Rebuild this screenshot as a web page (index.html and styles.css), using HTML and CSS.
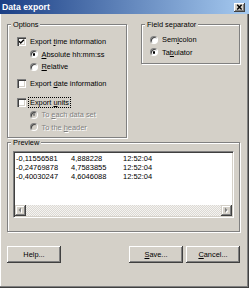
FILE: index.html
```html
<!DOCTYPE html>
<html>
<head>
<meta charset="utf-8">
<title>Data export</title>
<link rel="stylesheet" href="styles.css">
</head>
<body>
<div class="window">
  <div class="titlebar">
    <span class="title">Data export</span>
    <span class="close"><svg width="11" height="9" viewBox="0 0 11 9"><path d="M3.2 1.8 L7.6 6.4 M7.6 1.8 L3.2 6.4" stroke="#000" stroke-width="1.4" fill="none"/></svg></span>
  </div>
  <div class="body">
    <div class="top">
      <fieldset class="group options">
        <legend>Options</legend>
        <div class="gbody opt">
          <div class="row"><span class="box"><svg width="9" height="9" viewBox="0 0 9 9"><path d="M2.1 4.3 L3.7 5.9 L6.9 2.7" fill="none" stroke="#000" stroke-width="1.4"/></svg></span><span class="lbl">Export <u>t</u>ime information</span></div>
          <div class="row sub checked"><span class="radio"></span><span class="lbl"><u>A</u>bsolute hh:mm:ss</span></div>
          <div class="row sub"><span class="radio"></span><span class="lbl"><u>R</u>elative</span></div>
          <div class="row m1"><span class="box"></span><span class="lbl">Export <u>d</u>ate information</span></div>
          <div class="row m2"><span class="box"></span><span class="lbl focus">Export <u>u</u>nits</span></div>
          <div class="row sub disabled checked"><span class="radio"></span><span class="lbl">To <u>e</u>ach data set</span></div>
          <div class="row sub disabled"><span class="radio"></span><span class="lbl">To the <u>h</u>eader</span></div>
        </div>
      </fieldset>
      <fieldset class="group sep">
        <legend>Field separator</legend>
        <div class="gbody sepb">
          <div class="row"><span class="radio"></span><span class="lbl">Sem<u>i</u>colon</span></div>
          <div class="row checked"><span class="radio"></span><span class="lbl">Ta<u>b</u>ulator</span></div>
        </div>
      </fieldset>
    </div>
    <fieldset class="group preview">
      <legend>Preview</legend>
      <div class="listbox">
        <div class="lines">
          <div class="line"><span>-0,11556581</span><span>4,888228</span><span>12:52:04</span></div>
          <div class="line"><span>-0,24769878</span><span>4,7583855</span><span>12:52:04</span></div>
          <div class="line"><span>-0,40030247</span><span>4,6046088</span><span>12:52:04</span></div>
        </div>
        <div class="hscroll">
          <span class="sbtn"><svg width="11" height="11" viewBox="0 0 11 11"><path d="M7 3.5 L7 8.5 L4.5 6Z" fill="#fff"/><path d="M6 2.5 L6 7.5 L3.5 5Z" fill="#808080"/></svg></span>
          <span class="track"></span>
          <span class="sbtn"><svg width="11" height="11" viewBox="0 0 11 11"><path d="M5 3.5 L5 8.5 L7.5 6Z" fill="#fff"/><path d="M4 2.5 L4 7.5 L6.5 5Z" fill="#808080"/></svg></span>
        </div>
      </div>
    </fieldset>
    <div class="buttons">
      <button class="btn">Help...</button>
      <button class="btn save"><u>S</u>ave...</button>
      <button class="btn"><u>C</u>ancel...</button>
    </div>
  </div>
</div>
</body>
</html>
```
FILE: styles.css
```css
* { box-sizing: border-box; }
html, body { margin: 0; padding: 0; background: #fff; }
body { font-family: "Liberation Sans", Arial, sans-serif; font-size: 7.4px; color: #000; }

.window {
  width: 249px; height: 288px; background: #d4d0c8;
  box-shadow: inset -1px -1px #404040, inset -2px -2px #808080, inset 1px 0 #fff;
}
.titlebar {
  height: 14px; display: flex; align-items: center; justify-content: space-between;
  padding: 0 4px 0 2px;
  background: linear-gradient(to right, #1b3f85, #a6caf0);
}
.title { color: #fff; font-weight: bold; font-size: 8.7px; line-height: 14px; }
.close {
  width: 11px; height: 9px; display: flex; background: #d4d0c8;
  box-shadow: inset -1px -1px #404040, inset 1px 1px #fff, inset -2px -2px #808080;
}

.body { padding: 6px 9px 0 7px; }
.top { display: flex; gap: 14px; align-items: flex-start; }

fieldset.group {
  margin: 0; padding: 0; min-width: 0;
  border: 1px solid #808080;
  box-shadow: inset 1px 1px #fff, 1px 1px #fff;
}
legend {
  padding: 0 2px; margin-left: 3px; line-height: 9px; font-size: 7.4px;
  background: #d4d0c8;
}
.options { width: 120px; height: 118px; }
.sep { width: 99px; height: 44px; }

.gbody.opt { padding: 6.5px 0 0 9px; }
.gbody.sepb { padding: 4.5px 0 0 8px; }

.row { height: 12.5px; display: flex; align-items: center; white-space: nowrap; }
.row.m1 { margin-top: 4.5px; }
.row.m2 { margin-top: 6px; }
.row.sub { margin-left: 13px; }
.lbl { line-height: 9px; }

.box {
  width: 9px; height: 9px; flex: none; display: flex; margin-right: 4px;
  background: #fff;
  box-shadow: inset 1px 1px #808080, inset 2px 2px #404040, inset -1px -1px #fff, inset -2px -2px #d4d0c8;
}
.focus { border: 1px dotted #000; padding: 0 1px; margin-left: -2px; }

.radio {
  width: 8px; height: 8px; flex: none; border-radius: 50%;
  background: #fff; border: 1px solid; border-color: #808080 #fff #fff #808080;
  box-shadow: inset 1px 1px #404040;
  display: flex; align-items: center; justify-content: center;
  margin-right: 3.5px;
}
.sepb .radio { margin-right: 4px; }
.checked .radio::after { content: ""; width: 2.6px; height: 2.6px; border-radius: 50%; background: #000; }
.disabled .radio { background: #d4d0c8; }
.disabled.checked .radio::after { background: #808080; }
.disabled .lbl { color: #808080; text-shadow: 1px 1px #fff; }

.preview { margin-top: 16px; width: 233px; height: 94px; }
.listbox {
  margin: 4px 5px 0 5px; height: 67px; padding: 1px;
  border: 1px solid; border-color: #808080 #fff #fff #808080;
  box-shadow: inset 1px 1px #404040, inset -1px -1px #d4d0c8;
  background: #fff; display: flex; flex-direction: column;
}
.lines { flex: 1; padding: 0.5px 0 0 1px; font-size: 7.5px; line-height: 9px; }
.line { display: grid; grid-template-columns: 55px 52px auto; }
.hscroll { height: 11px; display: flex; flex: none; }
.sbtn {
  width: 11px; height: 11px; flex: none; display: flex; background: #d4d0c8;
  box-shadow: inset -1px -1px #404040, inset 1px 1px #d4d0c8, inset -2px -2px #808080, inset 2px 2px #fff;
}
.track {
  flex: 1;
  background: repeating-conic-gradient(#f4f3f1 0 25%, #dcd9d3 0 50%) 0 0 / 2px 2px;
}

.buttons { display: flex; gap: 3px; margin-top: 14px; }
.btn {
  width: 54px; height: 17px; padding: 0; border: none; margin: 0;
  font-family: inherit; font-size: 7.4px; color: #000; background: #d4d0c8;
  box-shadow: inset -1px -1px #404040, inset 1px 1px #fff, inset -2px -2px #808080;
}
.btn.save { margin-left: auto; }
```
